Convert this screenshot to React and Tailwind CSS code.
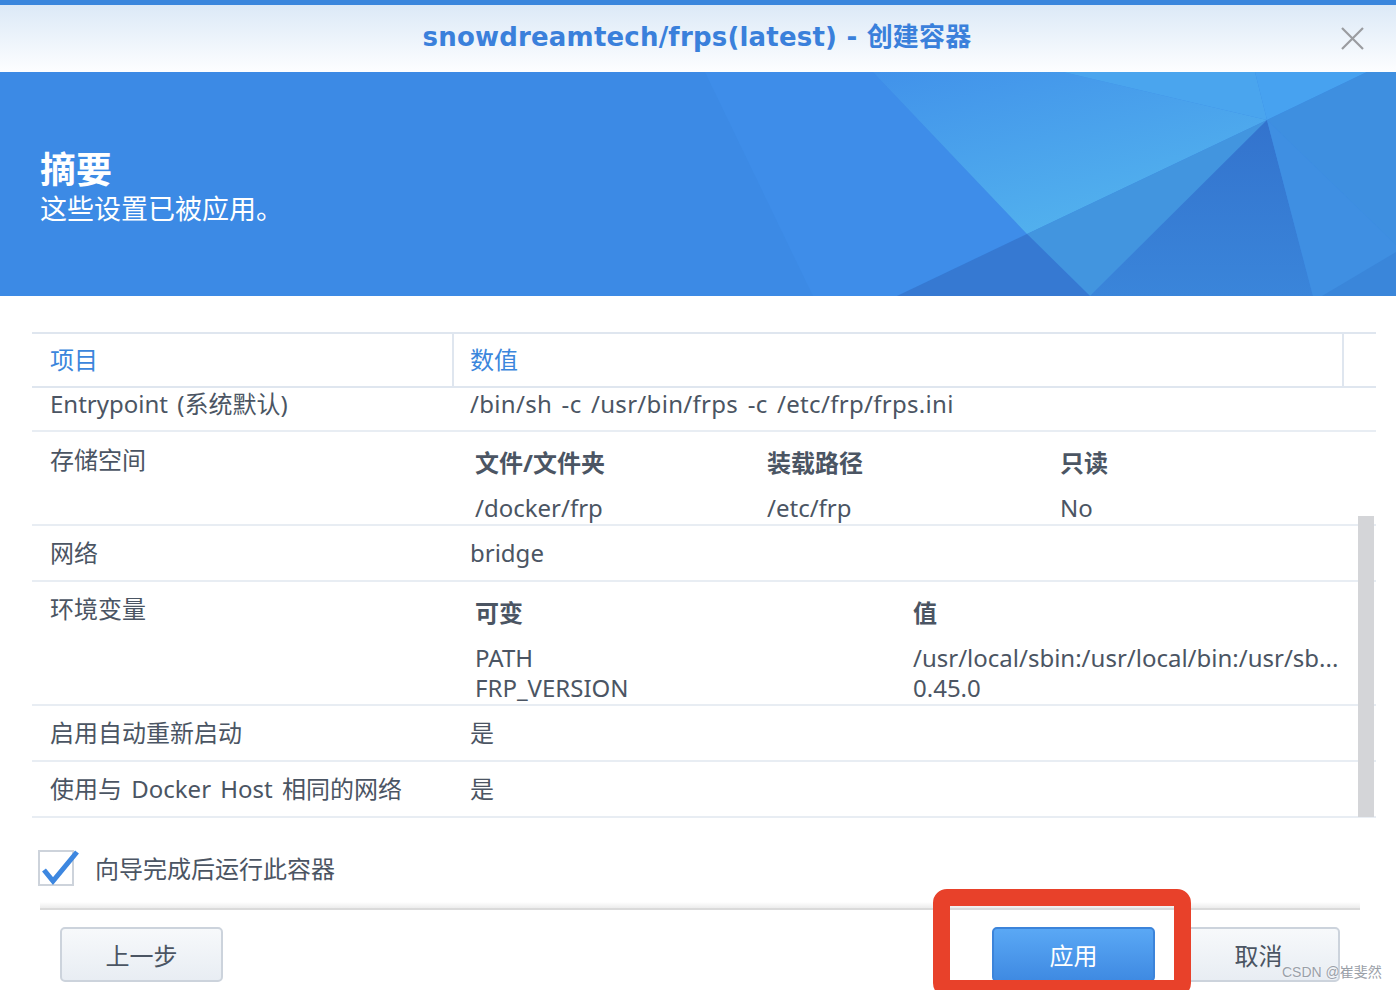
import React from "react";

const CJK = "font-['Noto_Sans','Noto_Sans_CJK_SC',sans-serif]";

function Banner() {
  return (
    <div className="relative h-[224px] bg-[#3c8ae5] overflow-hidden">
      <svg
        className="absolute inset-0"
        width="1396"
        height="224"
        viewBox="0 0 1396 224"
      >
        <defs>
          <linearGradient id="lite" x1="0" y1="0" x2="0.6" y2="1">
            <stop offset="0" stopColor="#4192ea" />
            <stop offset="1" stopColor="#53b3ee" />
          </linearGradient>
          <linearGradient id="dark" x1="0" y1="0" x2="0" y2="1">
            <stop offset="0" stopColor="#3373cd" />
            <stop offset="1" stopColor="#3a85da" />
          </linearGradient>
        </defs>
        <polygon points="705,0 873,0 1027,162 897,224 813,224" fill="#3e8de9" />
        <polygon points="873,0 1063,0 1267,48 1027,162" fill="url(#lite)" />
        <polygon points="1063,0 1255,0 1267,48" fill="#4aa5ee" />
        <polygon points="1255,0 1367,0 1267,48" fill="#47a2f0" />
        <polygon points="1367,0 1396,0 1396,173 1267,48" fill="#3e8fe0" />
        <polygon points="1027,162 1267,48 1090,224" fill="#4295df" />
        <polygon points="897,224 1027,162 1090,224" fill="#3679d2" />
        <polygon points="1267,48 1090,224 1313,224" fill="url(#dark)" />
        <polygon points="1267,48 1396,173 1396,224 1313,224" fill="#3f8fe2" />
        <polygon points="1396,180 1396,224 1322,224" fill="#3a86da" />
      </svg>
      <div className="relative pl-[40px] pt-[73px] text-white font-['Noto_Sans_CJK_SC',sans-serif]">
        <div className="text-[36px] font-bold leading-[44px]">摘要</div>
        <div className="text-[27px] leading-[32px] mt-[3px]">这些设置已被应用。</div>
      </div>
    </div>
  );
}

function Row({ label, children, className = "" }) {
  return (
    <div className={`flex border-b-2 border-[#e8edf3] ${className}`}>
      <div className="w-[420px] pl-[18px]">{label}</div>
      <div className="flex-1">{children}</div>
    </div>
  );
}

export default function App() {
  return (
    <div className={`relative w-[1396px] h-[990px] overflow-hidden bg-white text-[#4b5563] ${CJK}`}>
      <div className="h-[5px] bg-[#3a86dd]" />
      <div className="relative h-[67px] flex items-center justify-center bg-gradient-to-b from-[#dce9f7] to-[#fdfeff]">
        <span className="font-['DejaVu_Sans','Noto_Sans_CJK_SC',sans-serif] font-bold text-[26px] tracking-[0.2px] text-[#3a80db] mt-[-2px] ml-[-2px]">
          snowdreamtech/frps(latest) - 创建容器
        </span>
        <svg className="absolute left-[1341px] top-[22px]" width="23" height="23" viewBox="0 0 23 23">
          <path d="M1 1 L22 22 M22 1 L1 22" stroke="#9a9ca0" strokeWidth="2.2" />
        </svg>
      </div>
      <Banner />

      <div className="relative ml-[32px] mr-[20px] mt-[36px] text-[24px] leading-[32px] [word-spacing:3px]">
        {/* header */}
        <div className="flex h-[56px] border-t-2 border-b-2 border-[#dfe6ef] text-[#3b86dc]">
          <div className="w-[420px] pl-[18px] flex items-center">项目</div>
          <div className="flex-1 pl-[16px] flex items-center border-l-2 border-[#dfe6ef]">数值</div>
          <div className="w-[34px] border-l-2 border-[#dfe6ef]" />
        </div>

        <Row label="Entrypoint (系统默认)" className="h-[44px]">
          <div className="pl-[18px] tracking-[0.3px]">/bin/sh -c /usr/bin/frps -c /etc/frp/frps.ini</div>
        </Row>

        <Row label={<div className="pt-[12px]">存储空间</div>} className="h-[94px]">
          <div className="grid grid-cols-[292px_293px_1fr] pl-[23px] pt-[15px]">
            <div className="font-bold">文件/文件夹</div>
            <div className="font-bold">装载路径</div>
            <div className="font-bold">只读</div>
            <div className="mt-[13px]">/docker/frp</div>
            <div className="mt-[13px]">/etc/frp</div>
            <div className="mt-[13px]">No</div>
          </div>
        </Row>

        <Row label="网络" className="h-[56px] items-center">
          <div className="pl-[18px]">bridge</div>
        </Row>

        <Row label={<div className="pt-[11px]">环境变量</div>} className="h-[124px]">
          <div className="grid grid-cols-[438px_1fr] pl-[23px] pt-[15px] leading-[30px]">
            <div className="font-bold leading-[32px]">可变</div>
            <div className="font-bold leading-[32px]">值</div>
            <div className="mt-[14px]">PATH</div>
            <div className="mt-[14px]">/usr/local/sbin:/usr/local/bin:/usr/sb...</div>
            <div>FRP_VERSION</div>
            <div>0.45.0</div>
          </div>
        </Row>

        <Row label="启用自动重新启动" className="h-[56px] items-center">
          <div className="pl-[18px]">是</div>
        </Row>

        <Row label="使用与 Docker Host 相同的网络" className="h-[56px] items-center">
          <div className="pl-[18px]">是</div>
        </Row>

        <div className="absolute right-[2px] top-[184px] w-[16px] h-[301px] bg-[#d4d5d8]" />
      </div>

      {/* checkbox */}
      <div className="flex items-center mt-[32px] ml-[38px] h-[36px]">
        <div className="relative w-[36px] h-[36px] border-2 border-[#cdd3db] bg-white">
          <svg className="absolute left-[0px] top-[-4px]" width="40" height="40" viewBox="0 0 40 40">
            <path d="M4 22 L13 33 L37 4" fill="none" stroke="#3d87e0" strokeWidth="5" strokeLinejoin="miter" />
          </svg>
        </div>
        <span className="ml-[21px] text-[24px] leading-[32px] font-['Noto_Sans_CJK_SC',sans-serif]">向导完成后运行此容器</span>
      </div>

      {/* separator */}
      <div className="mx-[40px] mt-[16px] h-[8px] bg-gradient-to-b from-white to-[#ececec] border-b-2 border-[#dadada] w-[1320px]" />

      {/* buttons */}
      <div className="flex mt-[17px] px-[60px] justify-between font-['Noto_Sans_CJK_SC',sans-serif]">
        <button className="w-[163px] h-[55px] rounded-[5px] border-2 border-[#ccd3dc] bg-gradient-to-b from-[#f7f9fb] to-[#e8edf3] text-[24px] text-[#4b5563]">
          上一步
        </button>
        <div className="flex gap-[22px] mr-[-4px]">
          <button className="w-[163px] h-[55px] rounded-[5px] border-2 border-[#3c84da] bg-gradient-to-b from-[#5aa8f5] to-[#3f8ae2] text-[24px] text-white">
            应用
          </button>
          <button className="w-[163px] h-[55px] rounded-[5px] border-2 border-[#ccd3dc] bg-gradient-to-b from-[#f7f9fb] to-[#e8edf3] text-[24px] text-[#4b5563]">
            取消
          </button>
        </div>
      </div>

      {/* red annotation box */}
      <div className="absolute left-[933px] top-[889px] w-[258px] h-[108px] border-[17px] border-[#e8412a] rounded-[14px]" />

      {/* watermark */}
      <div className="absolute left-[1282px] top-[962px] text-[14px] leading-[20px] text-[#9aa0a8] font-['Liberation_Sans','Noto_Sans_CJK_SC',sans-serif] [text-shadow:0_0_2px_white]">
        CSDN @崔斐然
      </div>
    </div>
  );
}
